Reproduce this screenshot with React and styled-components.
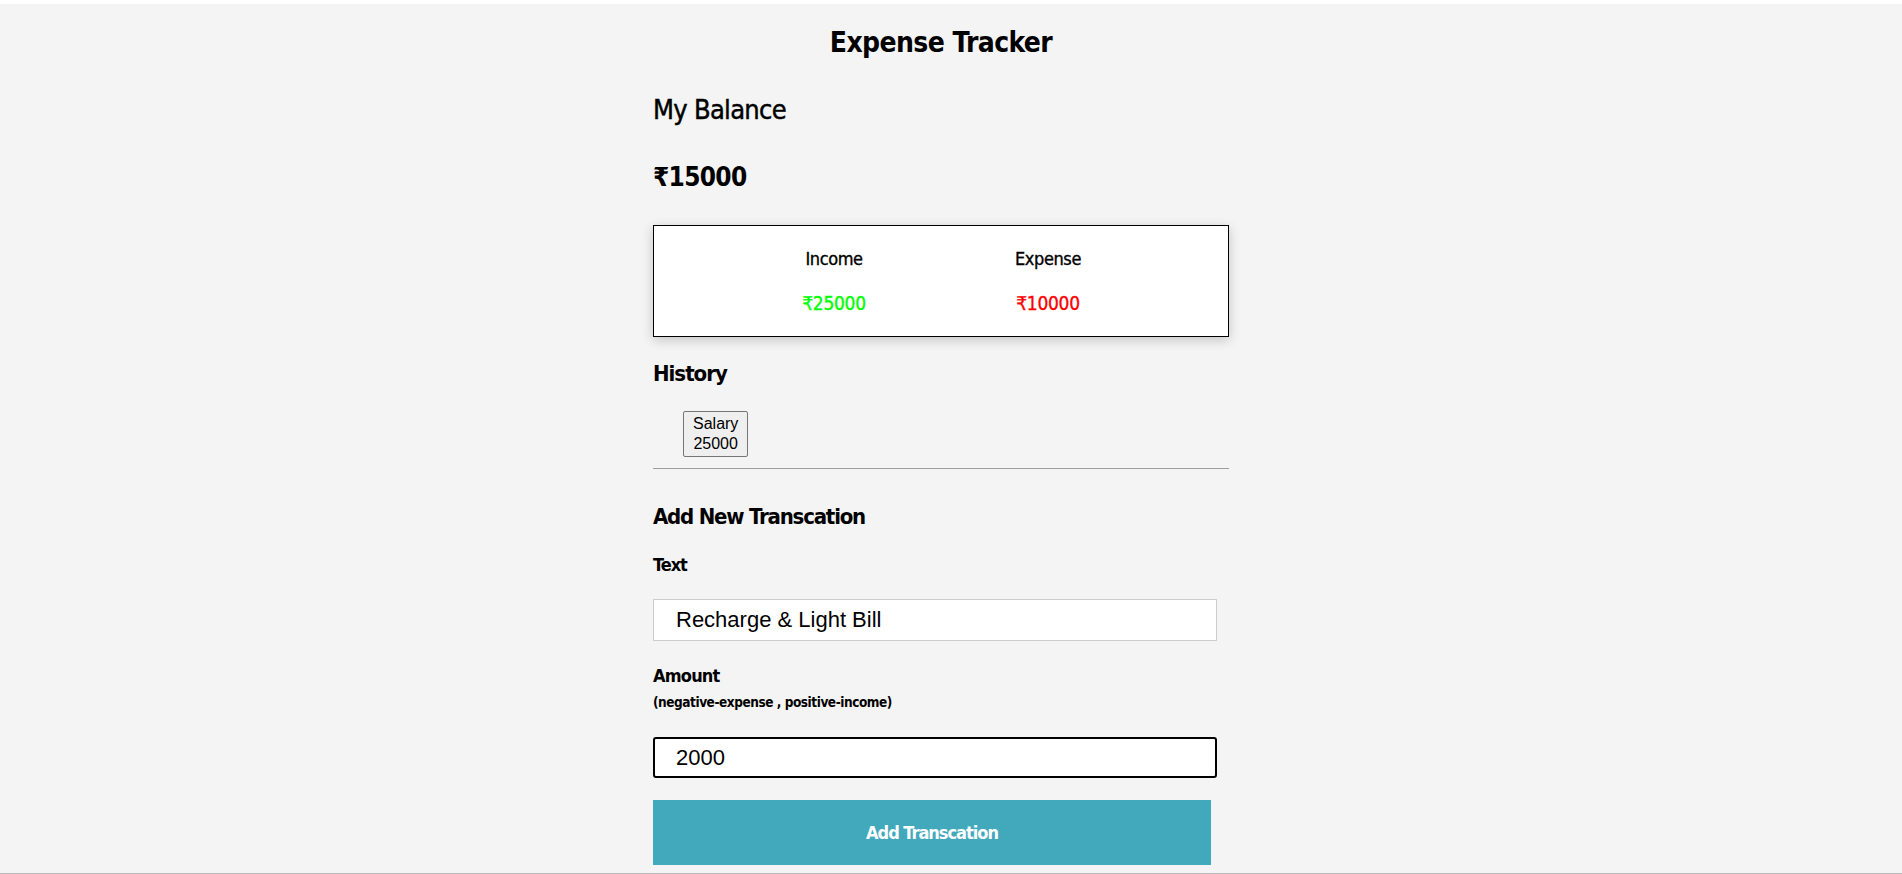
import React from "react";
import styled, { createGlobalStyle } from "styled-components";

const Global = createGlobalStyle`
  html, body { margin: 0; padding: 0; background: #ffffff; }
  body { font-family: "DejaVu Sans Condensed", "DejaVu Sans", sans-serif; color: #000; }
  * { box-sizing: border-box; }
`;

const Page = styled.div`
  margin-top: 4px;
  height: calc(100vh - 4px);
  background: #f4f4f4;
  border-bottom: 1px solid #bdbdbd;
  overflow: visible;
`;

const Container = styled.div`
  width: 576px;
  margin-left: calc(50% - 298px);
  padding-top: 20px;
  display: flex;
  flex-direction: column;
  align-items: flex-start;
`;

const Title = styled.h1`
  align-self: stretch;
  margin: 0;
  text-align: center;
  font-size: 28px;
  line-height: 37px;
  font-weight: 700;
  letter-spacing: -0.6px;
`;

const Heading = styled.h2`
  margin: ${(p) => p.$mt} 0 0;
  font-size: ${(p) => p.$size};
  line-height: ${(p) => p.$lh};
  font-weight: ${(p) => (p.$bold ? 700 : 400)};
  letter-spacing: ${(p) => p.$ls || "0"};
  -webkit-text-stroke: ${(p) => (p.$bold ? "0" : "0.45px #000")};
`;

const Card = styled.div`
  align-self: stretch;
  margin-top: 32px;
  height: 112px;
  background: #fff;
  border: 1px solid #000;
  box-shadow: 0 3px 11px rgba(0, 0, 0, 0.2);
  display: flex;
  justify-content: center;
  gap: 64px;
  padding-top: 22px;
`;

const Col = styled.div`
  width: 150px;
  display: flex;
  flex-direction: column;
  align-items: center;
  gap: 22px;
`;

const ColLabel = styled.div`
  font-size: 18px;
  line-height: 22px;
  letter-spacing: -0.4px;
  -webkit-text-stroke: 0.35px #000;
`;

const Amount = styled.div`
  font-size: 19px;
  line-height: 22px;
  letter-spacing: -0.3px;
  color: ${(p) => p.$color};
  -webkit-text-stroke: 0.35px ${(p) => p.$color};
`;

const HistoryList = styled.ul`
  list-style: none;
  margin: 23px 0 0;
  padding: 0 0 0 30px;
`;

const HistoryItem = styled.button`
  font-family: "Liberation Sans", Arial, sans-serif;
  font-size: 16px;
  line-height: 20px;
  color: #000;
  background: #efefef;
  border: 1px solid #767676;
  border-radius: 2px;
  padding: 2px 9px;
  display: flex;
  flex-direction: column;
  align-items: center;
`;

const Rule = styled.hr`
  align-self: stretch;
  margin: 11px 0 0;
  height: 0;
  border: none;
  border-top: 1px solid #9e9e9e;
`;

const Label = styled.label`
  display: block;
  font-size: 18px;
  line-height: 22px;
  font-weight: 700;
  letter-spacing: ${(p) => p.$ls || "-0.8px"};
  margin-top: ${(p) => p.$mt || "0"};
`;

const Hint = styled.div`
  font-size: 13.5px;
  line-height: 18px;
  font-weight: 700;
  letter-spacing: -0.45px;
  margin-top: 6px;
`;

const Input = styled.input`
  display: block;
  width: 564px;
  height: ${(p) => (p.$focused ? "41px" : "42px")};
  margin-top: ${(p) => p.$mt || "0"};
  padding: 0 0 0 ${(p) => (p.$focused ? "21px" : "22px")};
  font-family: "Liberation Sans", Arial, sans-serif;
  font-size: 22px;
  color: #000;
  background: #fff;
  border: ${(p) => (p.$focused ? "2px solid #000" : "1px solid #cccccc")};
  border-radius: ${(p) => (p.$focused ? "3px" : "0")};
  outline: none;
`;

const Button = styled.button`
  display: block;
  width: 558px;
  height: 65px;
  margin-top: 22px;
  padding: 0;
  background: #42a9bd;
  color: #fff;
  border: none;
  font-family: inherit;
  font-size: 18px;
  font-weight: 700;
  letter-spacing: -1px;
  cursor: pointer;
`;

export default function App() {
  return (
    <>
      <Global />
      <Page>
        <Container>
          <Title>Expense Tracker</Title>
          <Heading $mt="33px" $size="27px" $lh="32px" $ls="-0.7px">My Balance</Heading>
          <Heading $mt="35px" $size="26px" $lh="32px" $ls="-0.7px" $bold>₹15000</Heading>
          <Card>
            <Col>
              <ColLabel>Income</ColLabel>
              <Amount $color="#00ff00">₹25000</Amount>
            </Col>
            <Col>
              <ColLabel>Expense</ColLabel>
              <Amount $color="#ff0000">₹10000</Amount>
            </Col>
          </Card>
          <Heading $mt="23px" $size="22px" $lh="28px" $ls="-1px" $bold>History</Heading>
          <HistoryList>
            <li>
              <HistoryItem>
                <span>Salary</span>
                <span>25000</span>
              </HistoryItem>
            </li>
          </HistoryList>
          <Rule />
          <Heading $mt="34px" $size="22px" $lh="28px" $ls="-1.2px" $bold>Add New Transcation</Heading>
          <Label $mt="23px" $ls="-1px">Text</Label>
          <Input $mt="23px" defaultValue="Recharge & Light Bill" />
          <Label $mt="24px">Amount</Label>
          <Hint>(negative-expense , positive-income)</Hint>
          <Input $mt="26px" $focused defaultValue="2000" />
          <Button>Add Transcation</Button>
        </Container>
      </Page>
    </>
  );
}
